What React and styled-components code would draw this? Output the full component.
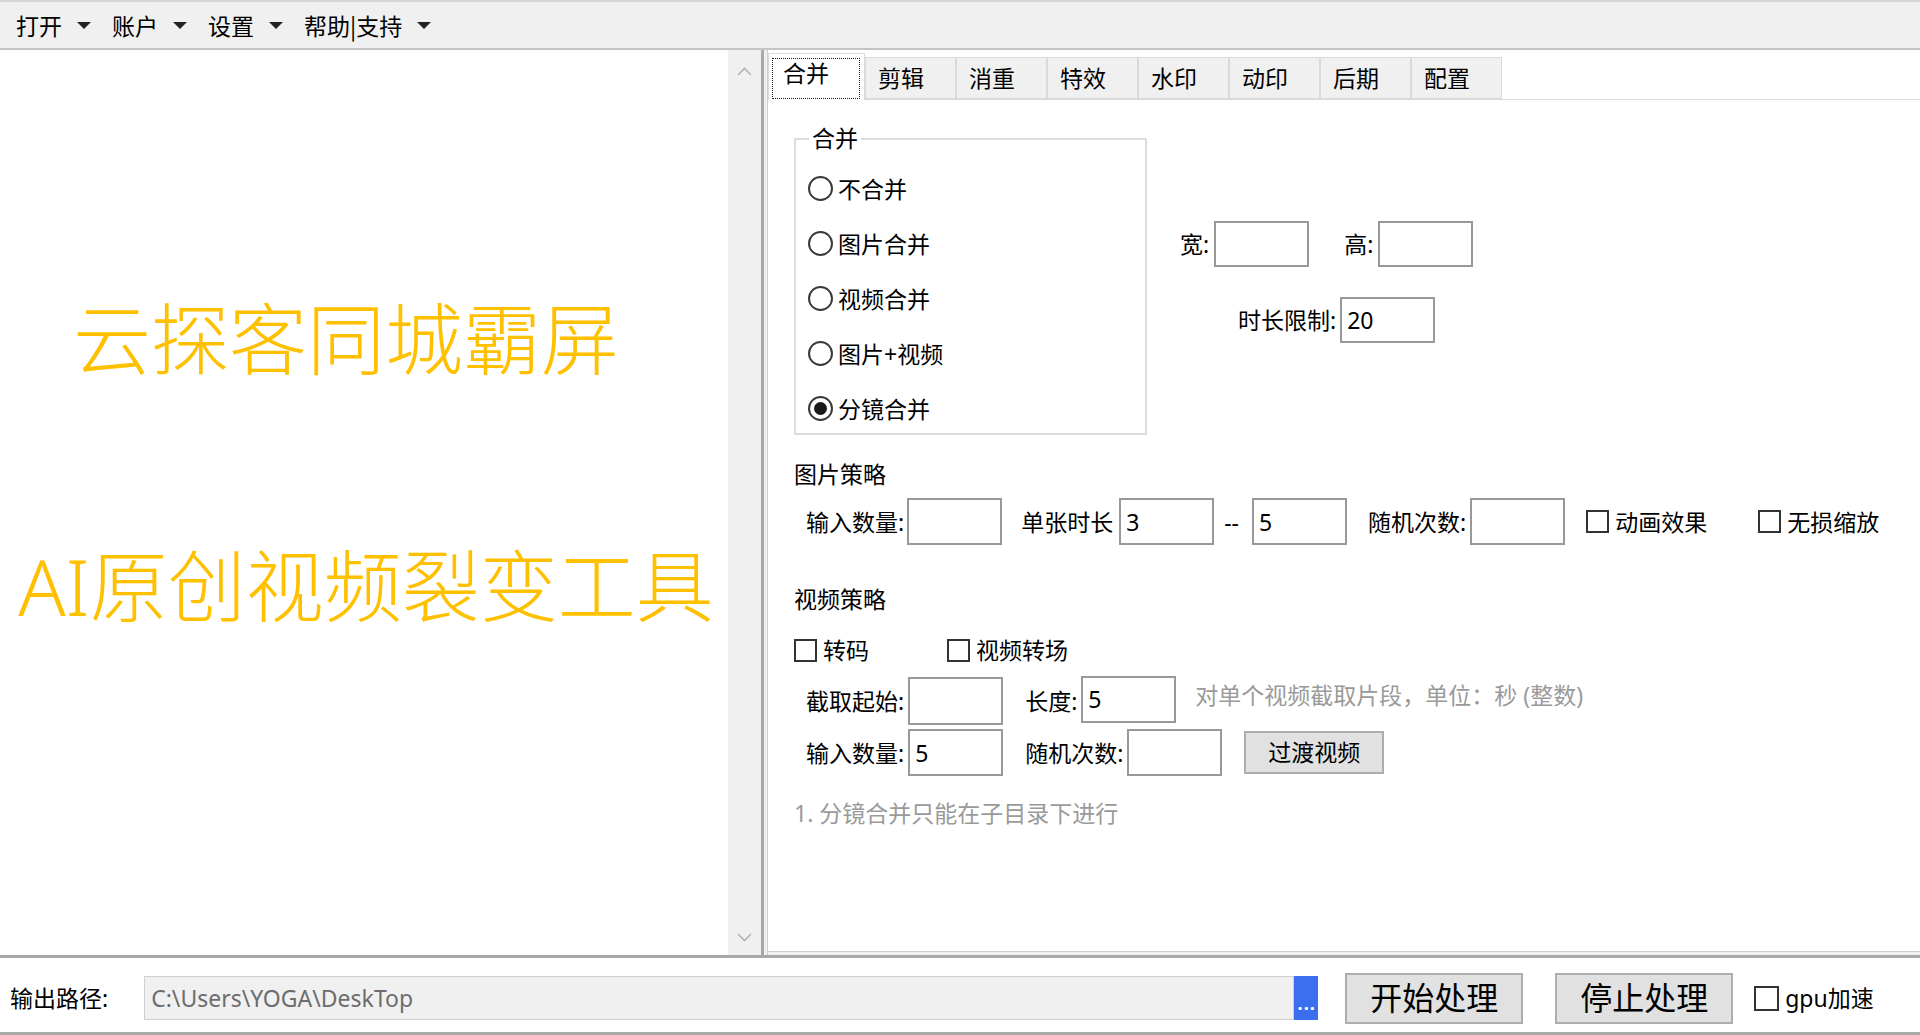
import React from 'react';
import styled, { createGlobalStyle } from 'styled-components';

const FONT = `"Noto Sans", "Noto Sans CJK SC", sans-serif`;
const CJK_FONT = `"Noto Sans CJK SC", "Noto Sans", sans-serif`;

const GlobalStyle = createGlobalStyle`
  html, body { margin: 0; padding: 0; width: 1920px; height: 1035px; overflow: hidden; background: #fff; }
  body { font-family: ${FONT}; }
  * { box-sizing: border-box; }
`;

const Window = styled.div`
  width: 1920px;
  height: 1035px;
  display: flex;
  flex-direction: column;
  background: #f0f0f0;
  font-family: ${FONT};
  color: #000;
`;

/* ---------- menu ---------- */
const MenuBar = styled.div`
  height: 50px;
  flex: none;
  display: flex;
  align-items: center;
  gap: 21px;
  padding-left: 16px;
  background: #f0f0f0;
  border-top: 2px solid #d6d6d6;
  border-bottom: 2px solid #c4c4c4;
`;
const MenuItem = styled.div`
  display: flex;
  align-items: center;
  gap: 15px;
  font-family: ${CJK_FONT};
  font-size: 23px;
  line-height: 28px;
`;
const Caret = styled.span`
  width: 0;
  height: 0;
  border-left: 7px solid transparent;
  border-right: 7px solid transparent;
  border-top: 7px solid #222;
`;

/* ---------- body ---------- */
const Body = styled.div`
  flex: 1;
  min-height: 0;
  display: flex;
`;
const LeftPane = styled.div`
  width: 728px;
  flex: none;
  background: #fff;
  display: flex;
  flex-direction: column;
  align-items: center;
  padding-top: 250px;
  gap: 169px;
`;
const Slogan = styled.div`
  font-size: 78px;
  font-weight: 300;
  line-height: 78px;
  color: #ffc000;
  white-space: nowrap;
  padding-right: ${p => p.$shift || 0}px;
  padding-left: ${p => p.$lshift || 0}px;
`;
const ScrollBar = styled.div`
  width: 33px;
  flex: none;
  background: #f0f0f0;
  display: flex;
  flex-direction: column;
  justify-content: space-between;
  align-items: center;
  padding: 17px 0 13px;
`;
const Splitter = styled.div`
  width: 7px;
  flex: none;
  background: #f0f0f0;
  border-left: 3px solid #a9a9a9;
  border-right: 1px solid #cfcfcf;
`;
const TabControl = styled.div`
  flex: 1;
  display: flex;
  flex-direction: column;
  background: #fff;
  border-bottom: 1px solid #cfcfcf;
  margin-bottom: 3px;
`;
const TabStrip = styled.div`
  height: 50px;
  flex: none;
  display: flex;
  align-items: flex-end;
  border-bottom: 1px solid #dadada;
  background: #fff;
`;
const Tab = styled.div`
  flex: none;
  position: relative;
  width: ${p => (p.$active ? 97 : 91)}px;
  height: ${p => (p.$active ? 47 : 42)}px;
  margin-bottom: ${p => (p.$active ? -1 : 0)}px;
  background: ${p => (p.$active ? '#fff' : '#f0f0f0')};
  border: 1px solid #dadada;
  border-bottom: ${p => (p.$active ? 'none' : '1px solid #dadada')};
  display: flex;
  align-items: ${p => (p.$active ? 'stretch' : 'center')};
  padding: ${p => (p.$active ? '4px 4px 1px 3px' : '0 0 0 12px')};
  font-size: 23px;
  line-height: 28px;
`;
const FocusRect = styled.div`
  flex: 1;
  border: 1px dotted #222;
  padding: 0 0 0 10px;
`;

const TabBody = styled.div`
  flex: 1;
  display: flex;
  flex-direction: column;
  align-items: flex-start;
  padding-left: 26px;
  font-size: 23px;
  line-height: 28px;
`;
const TopArea = styled.div`
  display: flex;
  align-items: flex-start;
  padding-top: 38px;
`;
const GroupBox = styled.div`
  position: relative;
  width: 353px;
  height: 297px;
  border: 2px solid #dcdcdc;
  padding: 21px 0 0 12px;
`;
const GroupTitle = styled.span`
  position: absolute;
  top: -16px;
  left: 13px;
  padding: 0 3px;
  background: #fff;
`;
const RadioRow = styled.label`
  height: 55px;
  display: flex;
  align-items: center;
  gap: 5px;
`;
const RadioDot = styled.span`
  width: 25px;
  height: 25px;
  border-radius: 50%;
  border: 2px solid #3a3a3a;
  background: #fff;
  display: flex;
  align-items: center;
  justify-content: center;
  &::after {
    content: '';
    width: 13px;
    height: 13px;
    border-radius: 50%;
    background: ${p => (p.$checked ? '#1a1a1a' : 'transparent')};
  }
`;
const SizeBlock = styled.div`
  margin: 83px 0 0 33px;
  display: flex;
  flex-direction: column;
  gap: 30px;
`;
const Line = styled.div`
  display: flex;
  align-items: center;
  padding-left: ${p => p.$indent || 0}px;
  margin-top: ${p => p.$mt || 0}px;
`;
const Field = styled.div`
  display: flex;
  align-items: center;
  gap: ${p => (p.$gap !== undefined ? p.$gap : 3)}px;
  margin-left: ${p => p.$ml || 0}px;
  white-space: nowrap;
`;
const TextBox = styled.div`
  width: 95px;
  height: ${p => p.$h || 46}px;
  border: 2px solid #999;
  background: #fff;
  padding-left: 5px;
  display: flex;
  align-items: center;
  margin-top: ${p => p.$mt || 0}px;
`;
const Heading = styled.div`
  margin-top: ${p => p.$mt}px;
`;
const Check = styled.span`
  width: ${p => p.$size || 23}px;
  height: ${p => p.$size || 23}px;
  flex: none;
  border: 2px solid #333;
  background: #fff;
`;
const CheckItem = styled.label`
  display: flex;
  align-items: center;
  gap: 6px;
  margin-left: ${p => p.$ml || 0}px;
  white-space: nowrap;
`;
const Hint = styled.div`
  color: #9a9a9a;
  margin-left: ${p => p.$ml || 0}px;
  margin-top: ${p => p.$mt || 0}px;
  white-space: nowrap;
`;
const Dash = styled.span`
  margin-left: ${p => p.$ml || 0}px;
  margin-right: ${p => p.$mr || 0}px;
`;
const PlainButton = styled.button`
  font-family: ${FONT};
  color: #000;
  background: #e1e1e1;
  border: 2px solid #adadad;
  border-radius: 0;
  padding: 0;
  width: ${p => p.$w}px;
  height: ${p => p.$h}px;
  font-size: ${p => p.$fs}px;
  line-height: 1;
  margin-left: ${p => p.$ml || 0}px;
  flex: none;
`;

/* ---------- bottom bar ---------- */
const BottomBar = styled.div`
  height: 80px;
  flex: none;
  background: #fff;
  border-top: 3px solid #a9a9a9;
  border-bottom: 3px solid #a9a9a9;
  display: flex;
  align-items: center;
  padding: 6px 0 0 10px;
  font-size: 23px;
  line-height: 28px;
`;
const PathBox = styled.div`
  margin-left: 36px;
  width: 1150px;
  height: 44px;
  background: #f0f0f0;
  border: 1px solid #cfcfcf;
  color: #6d6d6d;
  display: flex;
  align-items: center;
  padding-left: 6px;
  font-size: 23px;
`;
const BrowseButton = styled.div`
  width: 24px;
  height: 44px;
  background: #3c6ff0;
  color: #fff;
  font-size: 18px;
  font-weight: 700;
  line-height: 1;
  letter-spacing: 1px;
  display: flex;
  align-items: flex-end;
  justify-content: center;
  padding: 0 0 8px 1px;
`;

const Chevron = ({ up }) => (
  <svg width="15" height="9" viewBox="0 0 15 9">
    <polyline
      points={up ? '1,8 7.5,1.5 14,8' : '1,1 7.5,7.5 14,1'}
      fill="none"
      stroke="#b4b4b4"
      strokeWidth="1.6"
    />
  </svg>
);

const tabs = ['合并', '剪辑', '消重', '特效', '水印', '动印', '后期', '配置'];
const radios = ['不合并', '图片合并', '视频合并', '图片+视频', '分镜合并'];
const menus = ['打开', '账户', '设置', '帮助|支持'];

export default function App() {
  return (
    <Window>
      <GlobalStyle />
      <MenuBar>
        {menus.map(m => (
          <MenuItem key={m}>
            {m}
            <Caret />
          </MenuItem>
        ))}
      </MenuBar>

      <Body>
        <LeftPane>
          <Slogan $shift={36}>云探客同城霸屏</Slogan>
          <Slogan $lshift={4}>AI原创视频裂变工具</Slogan>
        </LeftPane>
        <ScrollBar>
          <Chevron up />
          <Chevron />
        </ScrollBar>
        <Splitter />
        <TabControl>
          <TabStrip>
            {tabs.map((t, i) =>
              i === 0 ? (
                <Tab key={t} $active>
                  <FocusRect>{t}</FocusRect>
                </Tab>
              ) : (
                <Tab key={t}>{t}</Tab>
              )
            )}
          </TabStrip>

          <TabBody>
            <TopArea>
              <GroupBox>
                <GroupTitle>合并</GroupTitle>
                {radios.map((r, i) => (
                  <RadioRow key={r}>
                    <RadioDot $checked={i === 4} />
                    {r}
                  </RadioRow>
                ))}
              </GroupBox>
              <SizeBlock>
                <Line>
                  <Field $gap={5}>
                    宽:
                    <TextBox />
                  </Field>
                  <Field $gap={5} $ml={35}>
                    高:
                    <TextBox />
                  </Field>
                </Line>
                <Line $indent={58}>
                  <Field $gap={4}>
                    时长限制:
                    <TextBox>20</TextBox>
                  </Field>
                </Line>
              </SizeBlock>
            </TopArea>

            <Heading $mt={25}>图片策略</Heading>
            <Line $mt={10} $indent={12}>
              <Field>
                输入数量:
                <TextBox $h={47} />
              </Field>
              <Field $ml={19} $gap={6}>
                单张时长
                <TextBox $h={47}>3</TextBox>
              </Field>
              <Dash $ml={10} $mr={13}>--</Dash>
              <TextBox $h={47}>5</TextBox>
              <Field $ml={21} $gap={4}>
                随机次数:
                <TextBox $h={47} />
              </Field>
              <CheckItem $ml={21}>
                <Check />
                动画效果
              </CheckItem>
              <CheckItem $ml={51}>
                <Check />
                无损缩放
              </CheckItem>
            </Line>

            <Heading $mt={40}>视频策略</Heading>
            <Line $mt={23}>
              <CheckItem>
                <Check />
                转码
              </CheckItem>
              <CheckItem $ml={78}>
                <Check />
                视频转场
              </CheckItem>
            </Line>
            <Line $mt={13} $indent={12}>
              <Field $gap={4}>
                截取起始:
                <TextBox $h={48} />
              </Field>
              <Field $ml={22} $gap={4}>
                长度:
                <TextBox $h={47} $mt={-4}>5</TextBox>
              </Field>
              <Hint $ml={19} $mt={-12}>对单个视频截取片段，单位：秒 (整数)</Hint>
            </Line>
            <Line $mt={4} $indent={12}>
              <Field $gap={4}>
                输入数量:
                <TextBox $h={47}>5</TextBox>
              </Field>
              <Field $ml={22} $gap={4}>
                随机次数:
                <TextBox $h={47} />
              </Field>
              <PlainButton $w={140} $h={43} $fs={23} $ml={22}>
                过渡视频
              </PlainButton>
            </Line>
            <Hint $mt={23}>1. 分镜合并只能在子目录下进行</Hint>
          </TabBody>
        </TabControl>
      </Body>

      <BottomBar>
        <span>输出路径:</span>
        <PathBox>C:\Users\YOGA\DeskTop</PathBox>
        <BrowseButton>...</BrowseButton>
        <PlainButton $w={178} $h={51} $fs={32} $ml={27}>
          开始处理
        </PlainButton>
        <PlainButton $w={178} $h={51} $fs={32} $ml={32}>
          停止处理
        </PlainButton>
        <CheckItem $ml={21}>
          <Check $size={25} />
          gpu加速
        </CheckItem>
      </BottomBar>
    </Window>
  );
}
